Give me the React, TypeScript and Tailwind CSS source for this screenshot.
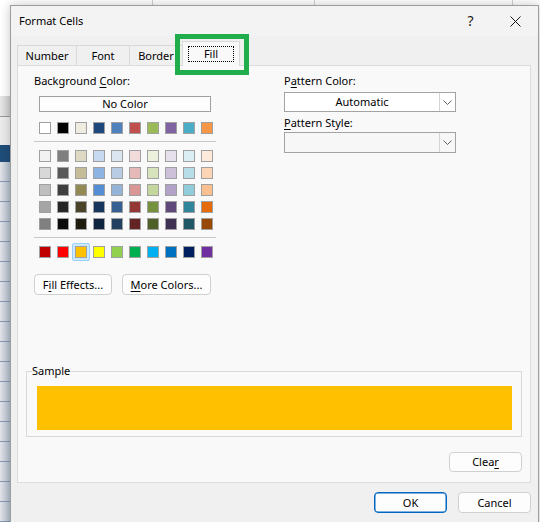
import React from "react";

// Office 2007-2010 theme palette
const themeColors = ["#FFFFFF", "#000000", "#EEECE1", "#1F497D", "#4F81BD", "#C0504D", "#9BBB59", "#8064A2", "#4BACC6", "#F79646"];

const themeShades = [
  ["#F2F2F2", "#7F7F7F", "#DDD9C3", "#C6D9F0", "#DBE5F1", "#F2DCDB", "#EBF1DD", "#E5E0EC", "#DBEEF3", "#FDEADA"],
  ["#D8D8D8", "#595959", "#C4BD97", "#8DB3E2", "#B8CCE4", "#E5B9B7", "#D7E3BC", "#CCC1D9", "#B7DDE8", "#FBD5B5"],
  ["#BFBFBF", "#3F3F3F", "#938953", "#548DD4", "#95B3D7", "#D99694", "#C3D69B", "#B2A2C7", "#92CDDC", "#FAC08F"],
  ["#A5A5A5", "#262626", "#494429", "#17365D", "#366092", "#953734", "#76923C", "#5F497A", "#31859B", "#E36C09"],
  ["#7F7F7F", "#0C0C0C", "#1D1B10", "#0F243E", "#244061", "#632423", "#4F6128", "#3F3151", "#205867", "#974806"],
];

const standardColors = ["#C00000", "#FF0000", "#FFC000", "#FFFF00", "#92D050", "#00B050", "#00B0F0", "#0070C0", "#002060", "#7030A0"];

const Swatch = ({ color, selected }: { color: string; selected?: boolean }) => (
  <div className="relative w-3 h-3">
    {selected && <div className="absolute -inset-[3px] rounded-[2px] border border-[#99d1ff] bg-[#cce8ff]" />}
    <div className="relative w-3 h-3 border border-[#a0a0a0]" style={{ backgroundColor: color }} />
  </div>
);

const SwatchRow = ({ colors, selected }: { colors: string[]; selected?: number }) => (
  <div className="flex gap-[6px] px-[5px]">
    {colors.map((c, i) => (
      <Swatch key={i} color={c} selected={i === selected} />
    ))}
  </div>
);

const Chevron = () => (
  <svg width="9" height="5" viewBox="0 0 9 5">
    <polyline points="0.5,0.5 4.5,4.5 8.5,0.5" fill="none" stroke="#606060" strokeWidth="1" />
  </svg>
);

const Dropdown = ({ value, white }: { value?: string; white?: boolean }) => (
  <div className={`flex h-full border border-[#a3a3a3] ${white ? "bg-white" : "bg-[#f7f7f7]"}`}>
    <div className="flex-1 flex items-center justify-center">{value}</div>
    <div className="w-4 border-l border-[#d4d4d4] flex items-center justify-center">
      <Chevron />
    </div>
  </div>
);

const Button = ({ children, className }: { children: any; className: string }) => (
  <div className={`flex items-center justify-center rounded-[4px] border border-[#d0d0d0] bg-[#fdfdfd] ${className}`}>
    {children}
  </div>
);

const Tab = ({ label, className }: { label: string; className: string }) => (
  <div className={`h-5 flex items-center justify-center border border-b-0 border-[#d9d9d9] bg-[#f0f0f0] ${className}`}>
    {label}
  </div>
);

const SheetStrip = () => (
  <div className="w-[10px] flex flex-col">
    <div className="h-[105px] bg-white" />
    <div className="h-[23px] bg-gradient-to-r from-[#e8e8e8] to-[#cfcfcf] border-b border-[#9a9a9a]" />
    <div className="h-[30px] bg-[#ececec]" />
    <div className="h-[19px] bg-[#1f4e79]" />
    {Array.from({ length: 18 }).map((_, i) => (
      <div key={i} className="h-5 shrink-0 border-b border-[#8496b0] bg-gradient-to-r from-[#e2e4e8] to-[#b3bfcf]" />
    ))}
  </div>
);

export default function App() {
  return (
    <div className="relative w-[540px] h-[522px] overflow-hidden bg-white font-['Noto_Sans',sans-serif] text-[11px] leading-4 text-black">
      {/* worksheet behind the dialog */}
      <div className="flex h-full">
        <SheetStrip />
        <div className="flex-1 relative">
          <div className="absolute left-[142px] top-0 w-px h-[6px] bg-[#d0d0d0]" />
          <div className="absolute left-[304px] top-0 w-px h-[6px] bg-[#d0d0d0]" />
          <div className="absolute left-[502px] top-0 w-px h-[6px] bg-[#d0d0d0]" />
        </div>
      </div>

      {/* Format Cells dialog */}
      <div className="absolute left-[10px] top-[5px] w-[529px] h-[530px] border border-[#9d9d9d] bg-[#f0f0f0] shadow-[0_0_10px_rgba(0,0,0,0.22)] flex flex-col">
        <div className="h-[30px] flex items-center bg-[#f3f3f3]">
          <span className="pl-2 flex-1">Format Cells</span>
          <div className="w-[45px] h-full flex items-center justify-center text-[14px] text-[#1a1a1a]">?</div>
          <div className="w-[45px] h-full flex items-center justify-center">
            <svg width="11" height="11" viewBox="0 0 11 11">
              <path d="M0.5 0.5 L10.5 10.5 M10.5 0.5 L0.5 10.5" stroke="#1a1a1a" strokeWidth="1" />
            </svg>
          </div>
        </div>

        {/* tabs */}
        <div className="h-[29px] flex items-end ml-[6px]">
          <Tab label="Number" className="w-[60px]" />
          <Tab label="Font" className="w-[54px] -ml-px" />
          <Tab label="Border" className="w-[54px] -ml-px" />
          <div className="relative z-10 -ml-px -mb-px h-[25px] w-[58px] flex flex-col items-center pt-1 border border-b-0 border-[#d9d9d9] bg-[#f9f9f9]">
            <span className="w-[46px] h-4 flex items-center justify-center border border-dotted border-black">Fill</span>
          </div>
        </div>

        {/* tab page */}
        <div className="ml-[6px] w-[514px] h-[418px] border border-[#dcdcdc] bg-[#f9f9f9] flex flex-col">
          <div className="flex pt-[7px]">
            <div className="ml-4 w-[182px] flex flex-col">
              <div>
                Background <u className="underline-offset-2">C</u>olor:
              </div>
              <div className="mt-[7px] mx-[5px] h-4 flex items-center justify-center border border-[#a0a0a0] bg-[#fdfdfd]">
                No Color
              </div>
              <div className="mt-[10px]">
                <SwatchRow colors={themeColors} />
              </div>
              <div className="mt-[7px] h-px bg-[#c8c8c8]" />
              <div className="mt-[8px] flex flex-col gap-[5px]">
                {themeShades.map((row, i) => (
                  <SwatchRow key={i} colors={row} />
                ))}
              </div>
              <div className="mt-[7px] h-px bg-[#c8c8c8]" />
              <div className="mt-[8px]">
                <SwatchRow colors={standardColors} selected={2} />
              </div>
              <div className="mt-4 flex gap-[10px]">
                <Button className="w-[78px] h-[21px]">
                  <span>
                    F<u className="underline-offset-2">i</u>ll Effects...
                  </span>
                </Button>
                <Button className="w-[89px] h-[21px]">
                  <span>
                    <u className="underline-offset-2">M</u>ore Colors...
                  </span>
                </Button>
              </div>
            </div>

            <div className="ml-[68px] w-[172px] flex flex-col">
              <div>
                P<u className="underline-offset-2">a</u>ttern Color:
              </div>
              <div className="mt-[3px] h-5">
                <Dropdown value="Automatic" white />
              </div>
              <div className="mt-[3px]">
                <u className="underline-offset-2">P</u>attern Style:
              </div>
              <div className="mt-px h-[21px]">
                <Dropdown />
              </div>
            </div>
          </div>

          <div className="mt-auto px-2 pb-[10px]">
            <fieldset className="border border-[#d8d8d8] pl-[10px] pr-[9px] pt-[7px] pb-[6px]">
              <legend className="-ml-[5px] leading-4">Sample</legend>
              <div className="h-[44px] bg-[#ffc000]" />
            </fieldset>
            <div className="mt-[15px] flex justify-end">
              <Button className="w-[73px] h-5">
                <span>
                  Clea<u className="underline-offset-2">r</u>
                </span>
              </Button>
            </div>
          </div>
        </div>

        <div className="mt-[9px] pr-[7px] flex justify-end gap-[11px]">
          <div className="w-[73px] h-[21px] flex items-center justify-center rounded-[4px] border border-[#0067c0] bg-[#fdfdfd] shadow-[inset_0_0_0_0.5px_#0067c0]">
            OK
          </div>
          <Button className="w-[73px] h-[21px]">Cancel</Button>
        </div>
      </div>

      {/* highlight around the Fill tab */}
      <div className="absolute left-[175px] top-[34px] w-[74px] h-[41px] border-[5px] border-[#1fae4b]" />
    </div>
  );
}
